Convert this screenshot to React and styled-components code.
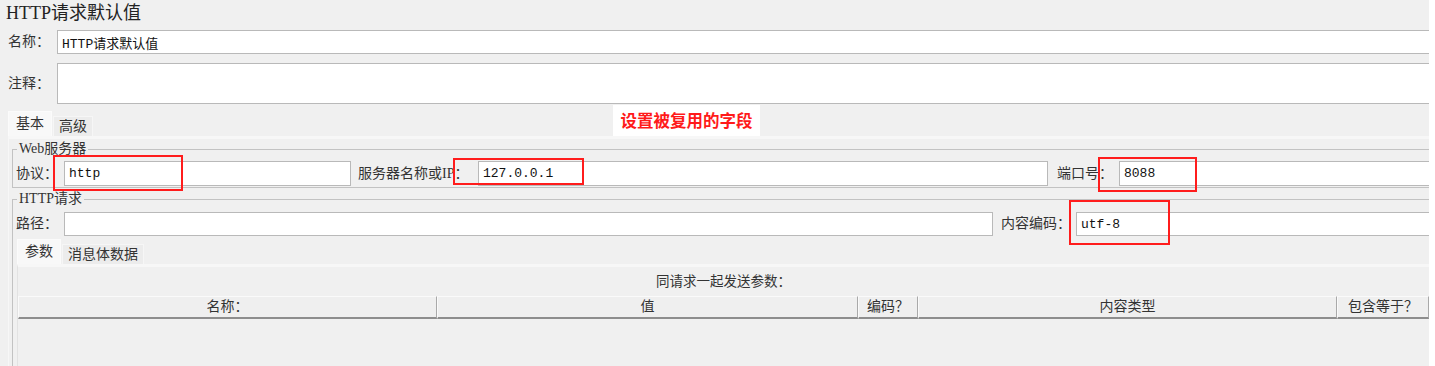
import styled, { createGlobalStyle } from "styled-components";

const GlobalStyle = createGlobalStyle`
  html, body {
    margin: 0;
    background: #ffffff;
    overflow: hidden;
  }
  body {
    font-family: "Liberation Serif", "Noto Sans CJK SC", serif;
    color: #333;
  }
  * {
    box-sizing: border-box;
  }
`;

const Viewport = styled.div`
  width: 1429px;
  height: 366px;
  overflow: hidden;
  background: #f0f0f0;
`;

const Frame = styled.div`
  width: 1460px;
`;

const Title = styled.h1`
  margin: 0;
  height: 26px;
  padding-left: 6px;
  font-size: 18px;
  line-height: 26px;
  font-weight: 400;
  color: #222;
`;

const Row = styled.div`
  display: grid;
  grid-template-columns: ${(p) => p.$cols};
  align-items: center;
  margin-top: ${(p) => p.$mt || 0}px;
  padding-left: ${(p) => p.$pl || 0}px;
`;

const Label = styled.span`
  padding-left: ${(p) => p.$indent || 0}px;
  font-size: 14px;
  line-height: 18px;
  color: #333;
  white-space: nowrap;
`;

const Spot = styled.div`
  position: relative;
  display: flex;
`;

const Field = styled.input`
  width: 100%;
  height: ${(p) => p.$h || 24}px;
  margin: 0;
  padding: 0 4px;
  border: 1px solid #b9b9b9;
  background: #fff;
  font-family: "Liberation Mono", "Noto Sans CJK SC", monospace;
  font-size: 13px;
  color: #111;
  outline: none;
`;

const Memo = styled.div`
  width: 100%;
  height: 41px;
  border: 1px solid #b9b9b9;
  background: #fff;
`;

const Mark = styled.span`
  position: absolute;
  left: ${(p) => p.$x}px;
  top: ${(p) => p.$y}px;
  width: ${(p) => p.$w}px;
  height: ${(p) => p.$h}px;
  border: 2px solid #ff1c1c;
  pointer-events: none;
`;

const TabStrip = styled.div`
  position: relative;
  display: flex;
  align-items: flex-end;
  height: ${(p) => p.$h}px;
  margin-top: ${(p) => p.$mt}px;
  padding-left: ${(p) => p.$pl || 0}px;
`;

const Tab = styled.div`
  height: ${(p) => (p.$active ? 25 : 20)}px;
  padding: 0 ${(p) => (p.$active ? 7 : 5)}px;
  margin-right: 1px;
  font-size: 14px;
  line-height: ${(p) => (p.$active ? 24 : 20)}px;
  color: #333;
  background: ${(p) => (p.$active ? "#f8f8f8" : "#ececec")};
  border: 1px solid ${(p) => (p.$active ? "#fbfbfb" : "#f6f6f6")};
  border-bottom: none;
`;

const Note = styled.div`
  position: absolute;
  left: 613px;
  top: -6px;
  width: 147px;
  height: 31px;
  background: #fff;
  color: #ff1a1a;
  font-family: "Noto Sans CJK SC", sans-serif;
  font-weight: 700;
  font-size: 16.5px;
  line-height: 31px;
  text-align: center;
`;

const Panel = styled.div`
  margin-left: 8px;
  padding: 2px 0 0 3px;
  border-top: 3px solid #f7f7f7;
  border-left: 1px solid #f7f7f7;
`;

const Group = styled.fieldset`
  margin: ${(p) => p.$mt}px 0 0;
  padding: ${(p) => p.$pt}px 0 ${(p) => p.$pb}px 3px;
  border: 1px solid #c2c2c2;
  min-width: 0;
`;

const Legend = styled.legend`
  margin-left: 1px;
  padding: 0 2px;
  font-size: 14px;
  line-height: 16px;
  color: #333;
`;

const ParamPanel = styled.div`
  margin-left: 1px;
  height: 120px;
  border-top: 3px solid #f7f7f7;
  border-left: 1px solid #e2e2e2;
`;

const ParamTable = styled.div`
  width: 1411px;
`;

const Caption = styled.div`
  height: 29px;
  font-size: 13.5px;
  line-height: 29px;
  text-align: center;
  color: #333;
`;

const Header = styled.div`
  display: grid;
  grid-template-columns: 419px 421px 60px 419px 92px;
`;

const HeadCell = styled.div`
  height: 23px;
  border-top: 1px solid #fafafa;
  border-left: 1px solid #fafafa;
  border-right: 1px solid #a9a9a9;
  border-bottom: 2px solid #8d8d8d;
  background: #efefef;
  font-size: 14px;
  line-height: 20px;
  text-align: center;
  color: #333;
  white-space: nowrap;
`;

const columns = ["名称：", "值", "编码？", "内容类型", "包含等于？"];

export default function App() {
  return (
    <>
      <GlobalStyle />
      <Viewport>
        <Frame>
          <Title>HTTP请求默认值</Title>

          <Row $cols="49px 1fr" $mt={4} $pl={8}>
            <Label>名称：</Label>
            <Field readOnly defaultValue="HTTP请求默认值" />
          </Row>

          <Row $cols="49px 1fr" $mt={9} $pl={8}>
            <Label>注释：</Label>
            <Memo />
          </Row>

          <TabStrip $h={25} $mt={7} $pl={8}>
            <Tab $active>基本</Tab>
            <Tab>高级</Tab>
            <Note>设置被复用的字段</Note>
          </TabStrip>

          <Panel>
            <Group $mt={0} $pt={4} $pb={1}>
              <Legend>Web服务器</Legend>
              <Row $cols="48px 287px 127px 570px 71px 1fr">
                <Label>协议：</Label>
                <Spot>
                  <Field $h={25} readOnly defaultValue="http" />
                  <Mark $x={-11} $y={-6} $w={130} $h={36} />
                </Spot>
                <Label $indent={7}>服务器名称或IP：</Label>
                <Spot>
                  <Field $h={25} readOnly defaultValue="127.0.0.1" />
                  <Mark $x={-25} $y={-3} $w={131} $h={27} />
                </Spot>
                <Label $indent={9}>端口号：</Label>
                <Spot>
                  <Field $h={25} readOnly defaultValue="8088" />
                  <Mark $x={-21} $y={-4} $w={99} $h={35} />
                </Spot>
              </Row>
            </Group>

            <Group $mt={3} $pt={5} $pb={0}>
              <Legend>HTTP请求</Legend>
              <Row $cols="48px 929px 83px 1fr">
                <Label>路径：</Label>
                <Field readOnly defaultValue="" />
                <Label $indent={8}>内容编码：</Label>
                <Spot>
                  <Field readOnly defaultValue="utf-8" />
                  <Mark $x={-7} $y={-12} $w={101} $h={45} />
                </Spot>
              </Row>

              <TabStrip $h={25} $mt={3} $pl={1}>
                <Tab $active>参数</Tab>
                <Tab>消息体数据</Tab>
              </TabStrip>

              <ParamPanel>
                <ParamTable>
                  <Caption>同请求一起发送参数：</Caption>
                  <Header>
                    {columns.map((col) => (
                      <HeadCell key={col}>{col}</HeadCell>
                    ))}
                  </Header>
                </ParamTable>
              </ParamPanel>
            </Group>
          </Panel>
        </Frame>
      </Viewport>
    </>
  );
}
